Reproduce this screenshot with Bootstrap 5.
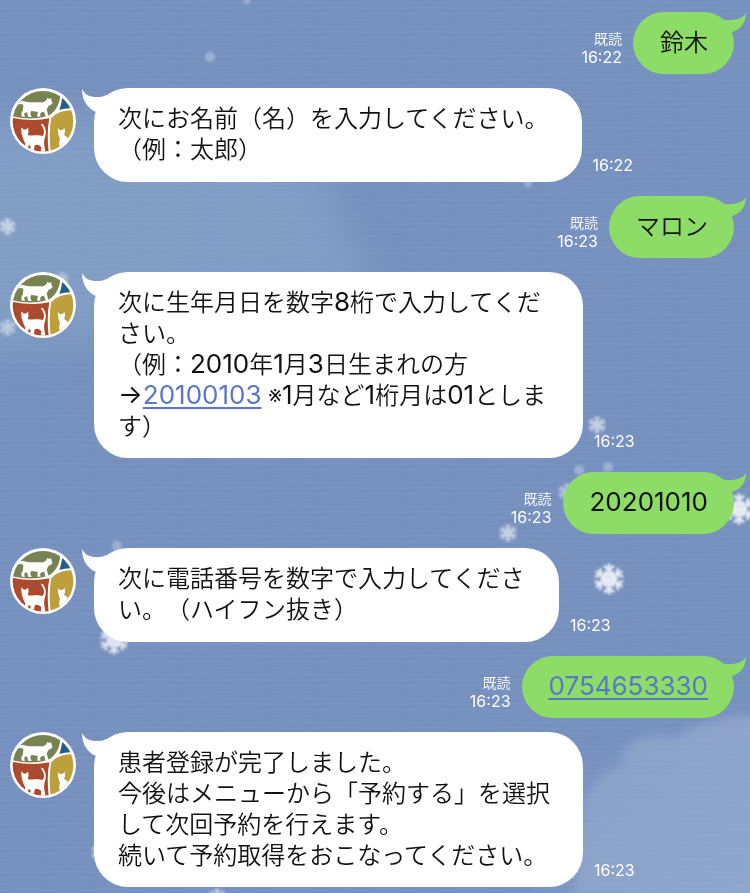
<!DOCTYPE html>
<html lang="ja">
<head>
<meta charset="utf-8">
<meta name="viewport" content="width=device-width, initial-scale=1">
<title>トーク</title>
<link href="https://cdn.jsdelivr.net/npm/bootstrap@5.3.0/dist/css/bootstrap.min.css" rel="stylesheet">
<style>
body { font-family: Inter, "Noto Sans CJK JP", sans-serif; background: #7791bf; color: #111; text-spacing-trim: space-all; }
.talk { min-height: 100vh; padding: 12px 16px 5px 10px; gap: 14px; }
.sky { z-index: 0; pointer-events: none; }
.msg { z-index: 1; }
.avatar { width: 66px; height: 66px; margin-right: 18px; }
.bubble { font-size: 24px; line-height: 31px; font-weight: 350; }
.bubble-in { background: #fff; border-radius: 34px; padding: 15px 33px 16px 24px; max-width: 489px; min-height: 94px; }
.bubble-in.short { max-width: 465px; }
.bubble-out { background: #8cdc67; border-radius: 31px; padding: 15px 26px 16px 27px; }
.num { font-size: 26px; line-height: 1; font-weight: 400; }
.bubble a { color: #5a76c8; text-decoration-thickness: 2px; text-underline-offset: 3px; }
.tail-in { left: -12px; top: 1px; }
.tail-out { right: -12px; top: 1px; }
.stamp { font-size: 16px; line-height: 18px; color: #fff; padding-bottom: 8px; margin: 0 11px; }
.read { font-size: 14px; font-weight: 350; }
</style>
<script src="https://cdn.jsdelivr.net/npm/bootstrap@5.3.0/dist/js/bootstrap.bundle.min.js"></script>
</head>
<body>
<svg width="0" height="0" class="position-absolute" aria-hidden="true">
  <defs>
    <clipPath id="disc"><circle cx="129" cy="124" r="91"/></clipPath>
    <symbol id="cats" viewBox="30 24 198 198">
      <circle cx="129" cy="123" r="99" fill="#fff"/>
      <g clip-path="url(#disc)">
        <path fill="#778350" d="M30 107Q95 124 146 107Q184 84 182 24H30Z"/>
        <path fill="#265d83" d="M188 24Q188 62 178 90Q200 82 230 86V24Z"/>
        <path fill="#ab4a2d" d="M30 112Q95 127 148 115Q139 160 147 224H30Z"/>
        <path fill="#bd9f3c" d="M154 115Q176 88 230 90V224H153Q145 160 154 115Z"/>
        <path fill="#fff" d="M38 82C48 67 60 61 73 64C89 70 108 65 121 67C130 68 136 64 139 60L143 53L148 58L153 53L155 64L158 69L152 75L146 77L140 88L144 103L147 109L137 110L132 95L126 96L120 102L122 110L112 110L112 103L114 96L101 94L93 93L91 102L95 111L84 110L82 98L78 97L72 102L75 110L65 110L64 100L69 90L70 74C61 69 50 74 42 85Z"/>
        <path fill="#fff" d="M64 142L72 149L80 148L84 142L86 156L83 165C99 169 116 163 128 168C135 159 133 147 124 135C122 131 126 129 130 134C139 147 139 160 134 174L132 190L136 216H122L124 201L114 194L104 196L101 216H90L92 198L86 195L81 216H68L73 204L76 192L70 178L66 166L64 155Z"/>
        <path fill="#fff" d="M173 144L179 150L187 150L194 144L195 158L192 164L202 172L207 186L208 215H174L181 203L177 192L180 176L175 163Z"/>
      </g>
    </symbol>
    <symbol id="flake" viewBox="-20 -20 40 40">
      <g fill="none" stroke="#fff" stroke-width="3" stroke-linecap="round">
        <g id="arm"><path d="M0 0V-17M-5 -15L0 -10L5 -15M-4 -8L0 -4L4 -8"/></g>
        <use href="#arm" transform="rotate(60)"/><use href="#arm" transform="rotate(120)"/>
        <use href="#arm" transform="rotate(180)"/><use href="#arm" transform="rotate(240)"/><use href="#arm" transform="rotate(300)"/>
      </g>
    </symbol>
    <symbol id="tailL" viewBox="0 0 28 26"><path fill="#fff" d="M0 0C3 6 8 8 14 8C18 8 21 8 24 6L28 8V26L14 23C7 20 0 13 0 0Z"/></symbol>
    <symbol id="tailR" viewBox="0 0 28 26"><path fill="#8cdc67" d="M28 0C25 5 19 7 12 7C9 7 6 7 4 6L0 8V24L14 19C21 17 28 11 28 0Z"/></symbol>
    <pattern id="grain" width="90" height="12" patternUnits="userSpaceOnUse">
      <path d="M0 2Q22 0 45 2T90 2M0 8Q22 10 45 8T90 8" fill="none" stroke="#fff" stroke-opacity=".03"/>
      <path d="M0 5Q22 7 45 5T90 5" fill="none" stroke="#234f8f" stroke-opacity=".03"/>
    </pattern>
    <filter id="soft" x="-20%" y="-20%" width="140%" height="140%"><feGaussianBlur stdDeviation="18"/></filter>
    <filter id="edge"><feGaussianBlur stdDeviation="4"/></filter>
    <filter id="haze"><feGaussianBlur stdDeviation=".9"/></filter>
    <linearGradient id="cloud" x1="0" y1="0" x2="1" y2="1"><stop stop-color="#8fa6ca" stop-opacity=".7"/><stop offset="1" stop-color="#97a9cf"/></linearGradient>
  </defs>
</svg>

<main class="talk position-relative d-flex flex-column overflow-hidden">
  <svg class="sky position-absolute top-0 start-0 w-100 h-100" viewBox="0 0 750 893" preserveAspectRatio="xMidYMin slice" aria-hidden="true">
    <rect width="750" height="893" fill="#7791bf"/>
    <path filter="url(#soft)" fill="#88a5c8" fill-opacity=".6" d="M-30 120H90L320 170L350 250L380 290L200 300L90 340L-30 350Z"/>
    <path filter="url(#edge)" fill="url(#cloud)" d="M575 893L585 800L595 783L612 770L624 765L622 752L640 738L660 735L675 738L695 727L725 718L770 714V910H560Z"/>
    <path filter="url(#soft)" fill="#8ba4ca" fill-opacity=".6" d="M560 920L590 785L650 760L770 730V920Z"/>
    <rect width="750" height="893" fill="url(#grain)"/>
    <g filter="url(#haze)">
      <use href="#flake" x="592" y="562" width="34" height="34" opacity=".85"/>
      <use href="#flake" x="722" y="492" width="34" height="34" opacity=".85"/>
      <use href="#flake" x="98" y="624" width="32" height="32" opacity=".8"/>
      <use href="#flake" x="498" y="523" width="20" height="20" opacity=".6"/>
      <use href="#flake" x="587" y="415" width="20" height="20" opacity=".6"/>
      <use href="#flake" x="557" y="482" width="20" height="20" opacity=".5"/>
      <use href="#flake" x="-2" y="217" width="19" height="19" opacity=".6"/>
      <use href="#flake" x="-2" y="318" width="19" height="19" opacity=".5"/>
      <use href="#flake" x="54" y="271" width="16" height="16" opacity=".4"/>
      <use href="#flake" x="90" y="842" width="20" height="20" opacity=".6"/>
      <use href="#flake" x="207" y="887" width="20" height="20" opacity=".6"/>
      <g fill="#fff" fill-opacity=".28"><circle cx="210" cy="57" r="5"/><circle cx="579" cy="470" r="5"/><circle cx="608" cy="467" r="5"/><circle cx="117" cy="546" r="5"/><circle cx="528" cy="183" r="4"/><circle cx="247" cy="1" r="3"/></g>
    </g>
  </svg>

  <div class="msg d-flex justify-content-end align-items-end">
    <div class="stamp text-end"><div class="read">既読</div><time>16:22</time></div>
    <div class="bubble bubble-out position-relative">鈴木<svg class="tail-out position-absolute" width="28" height="26"><use href="#tailR"/></svg></div>
  </div>

  <div class="msg d-flex align-items-end">
    <svg class="avatar flex-shrink-0 align-self-start" role="img" aria-label="アイコン"><use href="#cats"/></svg>
    <div class="bubble bubble-in position-relative"><svg class="tail-in position-absolute" width="28" height="26"><use href="#tailL"/></svg>次にお名前（名）を入力してください。<br>（例：太郎）</div>
    <time class="stamp">16:22</time>
  </div>

  <div class="msg d-flex justify-content-end align-items-end">
    <div class="stamp text-end"><div class="read">既読</div><time>16:23</time></div>
    <div class="bubble bubble-out position-relative">マロン<svg class="tail-out position-absolute" width="28" height="26"><use href="#tailR"/></svg></div>
  </div>

  <div class="msg d-flex align-items-end">
    <svg class="avatar flex-shrink-0 align-self-start" role="img" aria-label="アイコン"><use href="#cats"/></svg>
    <div class="bubble bubble-in position-relative"><svg class="tail-in position-absolute" width="28" height="26"><use href="#tailL"/></svg>次に生年月日を数字<span class="num">8</span>桁で入力してください。<br>（例：<span class="num">2010</span>年<span class="num">1</span>月<span class="num">3</span>日生まれの方<br><span class="num">→<a href="tel:20100103">20100103</a></span> ※<span class="num">1</span>月など<span class="num">1</span>桁月は<span class="num">01</span>とします）</div>
    <time class="stamp">16:23</time>
  </div>

  <div class="msg d-flex justify-content-end align-items-end">
    <div class="stamp text-end"><div class="read">既読</div><time>16:23</time></div>
    <div class="bubble bubble-out position-relative"><span class="num">20201010</span><svg class="tail-out position-absolute" width="28" height="26"><use href="#tailR"/></svg></div>
  </div>

  <div class="msg d-flex align-items-end">
    <svg class="avatar flex-shrink-0 align-self-start" role="img" aria-label="アイコン"><use href="#cats"/></svg>
    <div class="bubble bubble-in short position-relative"><svg class="tail-in position-absolute" width="28" height="26"><use href="#tailL"/></svg>次に電話番号を数字で入力してください。（ハイフン抜き）</div>
    <time class="stamp">16:23</time>
  </div>

  <div class="msg d-flex justify-content-end align-items-end">
    <div class="stamp text-end"><div class="read">既読</div><time>16:23</time></div>
    <div class="bubble bubble-out position-relative"><a class="num" href="tel:0754653330">0754653330</a><svg class="tail-out position-absolute" width="28" height="26"><use href="#tailR"/></svg></div>
  </div>

  <div class="msg d-flex align-items-end">
    <svg class="avatar flex-shrink-0 align-self-start" role="img" aria-label="アイコン"><use href="#cats"/></svg>
    <div class="bubble bubble-in position-relative"><svg class="tail-in position-absolute" width="28" height="26"><use href="#tailL"/></svg>患者登録が完了しました。<br>今後はメニューから「予約する」を選択して次回予約を行えます。<br>続いて予約取得をおこなってください。</div>
    <time class="stamp">16:23</time>
  </div>
</main>
</body>
</html>
